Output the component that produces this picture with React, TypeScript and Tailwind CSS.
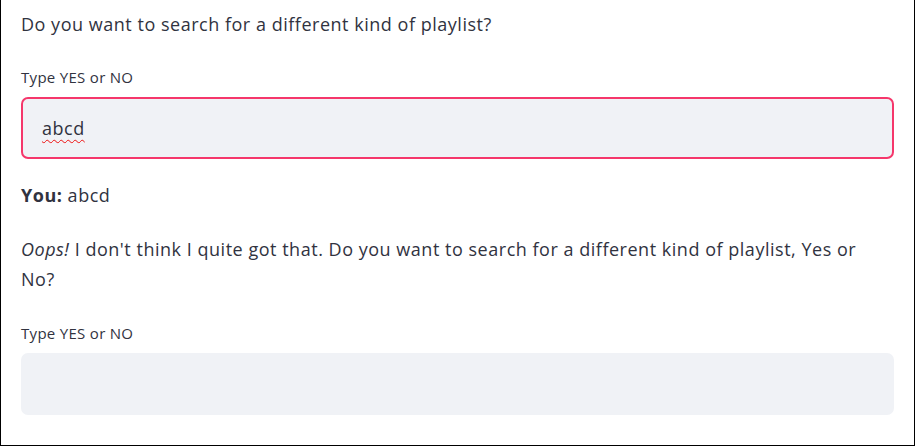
import React from "react";

export default function App() {
  return (
    <div
      className="w-[915px] h-[446px] bg-white border-l border-r border-b border-black px-[20px] text-[#31333F]"
      style={{ fontFamily: '"Open Sans", "Noto Sans", sans-serif' }}
    >
      <p className="pt-[10px] text-[18px] tracking-[0.52px] leading-[28px]">
        Do you want to search for a different kind of playlist?
      </p>
      <label className="block mt-[29px] text-[15px] tracking-[0.3px] leading-[20px]">Type YES or NO</label>
      <div className="mt-[10px] h-[62px] rounded-[7px] border-2 border-[#f5376b] bg-[#f0f2f6] flex items-center px-[19px]">
        <span className="text-[18px] tracking-[0.52px] underline decoration-wavy decoration-[#e11] decoration-1 underline-offset-[4px]">
          abcd
        </span>
      </div>
      <p className="mt-[22px] text-[18px] tracking-[0.52px] leading-[28px]">
        <b className="font-bold">You:</b> abcd
      </p>
      <p className="mt-[25px] text-[18px] tracking-[0.52px] leading-[30px]">
        <i>Oops!</i> I don't think I quite got that. Do you want to search for a different kind of playlist, Yes or
        <br />
        No?
      </p>
      <label className="block mt-[29px] text-[15px] tracking-[0.3px] leading-[20px]">Type YES or NO</label>
      <div className="mt-[10px] h-[62px] rounded-[7px] bg-[#f0f2f6]" />
    </div>
  );
}
